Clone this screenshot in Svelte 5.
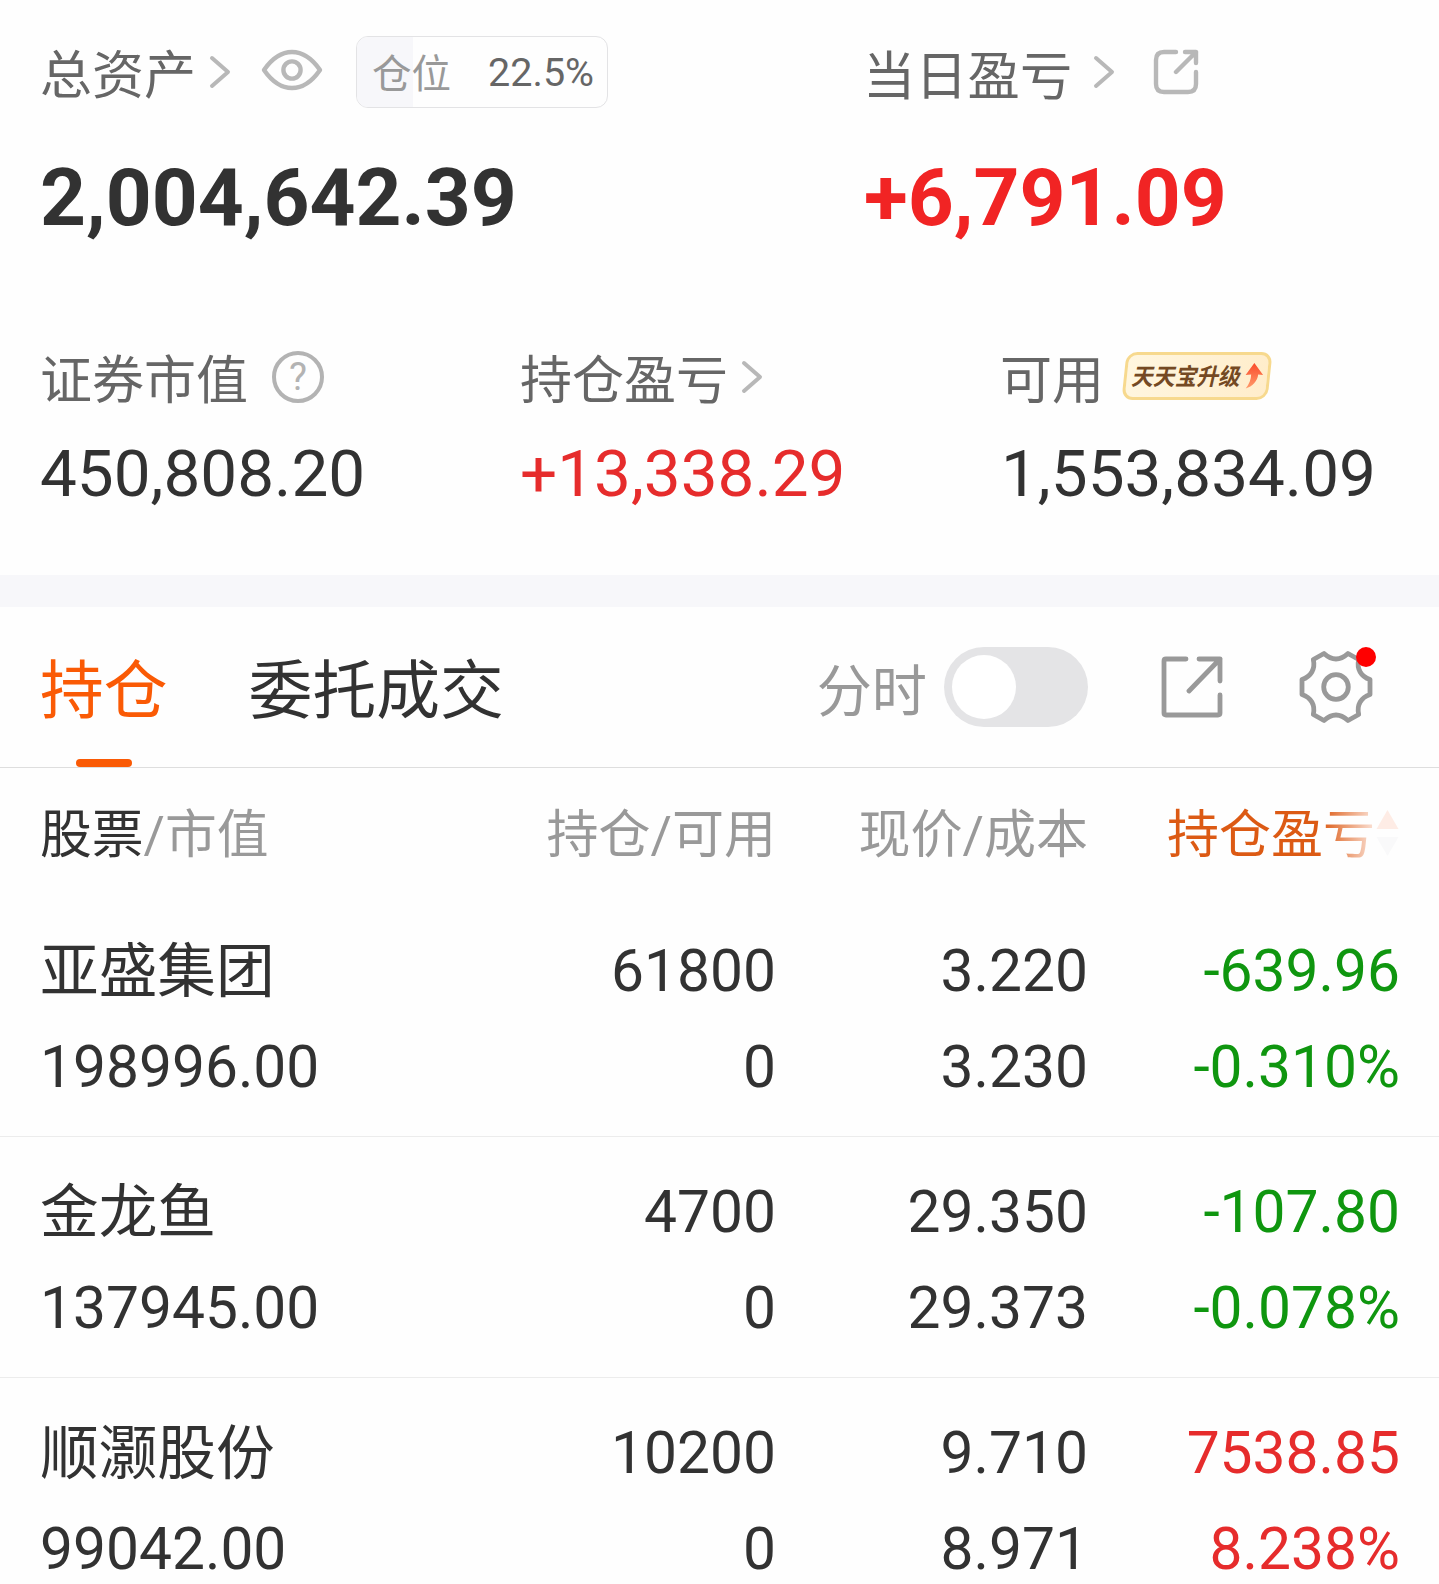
<script>
  const position = 22.5;
  const summary = [
    { label: '证券市值', value: '450,808.20', icon: 'help', tone: '' },
    { label: '持仓盈亏', value: '+13,338.29', icon: 'chevron', tone: 'up' },
    { label: '可用', value: '1,553,834.09', icon: 'badge', tone: '' }
  ];
  const holdings = [
    { name: '亚盛集团', value: '198996.00', held: '61800', free: '0', price: '3.220', cost: '3.230', pnl: '-639.96', pct: '-0.310%', tone: 'down' },
    { name: '金龙鱼', value: '137945.00', held: '4700', free: '0', price: '29.350', cost: '29.373', pnl: '-107.80', pct: '-0.078%', tone: 'down' },
    { name: '顺灏股份', value: '99042.00', held: '10200', free: '0', price: '9.710', cost: '8.971', pnl: '7538.85', pct: '8.238%', tone: 'up' }
  ];
</script>

{#snippet chevron()}
  <svg class="chevron" width="22" height="34" viewBox="0 0 22 34"><path d="M3 3 L19 17 L3 31" /></svg>
{/snippet}

<main>
  <section class="assets">
    <div class="top">
      <div class="total">
        <div class="label-row">
          <span class="label">总资产</span>
          {@render chevron()}
          <svg class="eye" width="62" height="42" viewBox="0 0 62 42">
            <path d="M3 21 C12 8 21 3 31 3 C41 3 50 8 59 21 C50 34 41 39 31 39 C21 39 12 34 3 21 Z" />
            <circle cx="31" cy="21" r="8.6" />
          </svg>
          <div class="pill">
            <div class="fill" style:width="{position}%"></div>
            <span class="pill-label">仓位</span>
            <span class="pill-value">{position}%</span>
          </div>
        </div>
        <div class="big">2,004,642.39</div>
      </div>
      <div class="today">
        <div class="label-row">
          <span class="label">当日盈亏</span>
          {@render chevron()}
          <svg class="share-small" width="46" height="46" viewBox="0 0 46 46">
            <path d="M23 3 H11 Q3 3 3 11 V35 Q3 43 11 43 H35 Q43 43 43 35 V23" />
            <path d="M32 3 H43 V14 M43 3 L23 23" />
          </svg>
        </div>
        <div class="big red">+6,791.09</div>
      </div>
    </div>
    <div class="summary">
      {#each summary as item}
        <div class="metric">
          <div class="metric-label">
            <span class="label">{item.label}</span>
            {#if item.icon === 'help'}
              <span class="help">?</span>
            {:else if item.icon === 'chevron'}
              {@render chevron()}
            {:else}
              <span class="badge">
                <span class="badge-text">天天宝升级</span>
                <svg width="20" height="28" viewBox="0 0 20 28">
                  <defs><linearGradient id="rise" x1="0" y1="0" x2="0" y2="1"><stop offset="0" stop-color="#fa4b2b" /><stop offset="1" stop-color="#ff9b6a" /></linearGradient></defs>
                  <path fill="url(#rise)" d="M9 1 L19 13 L14 12.500 C14 19 9.500 24.500 3 26.500 C6 22.500 7.500 17 7 12.500 L1.500 13 Z" />
                </svg>
              </span>
            {/if}
          </div>
          <div class="metric-value {item.tone}">{item.value}</div>
        </div>
      {/each}
    </div>
  </section>

  <nav>
    <div class="tab active"><span>持仓</span></div>
    <div class="tab"><span>委托成交</span></div>
    <div class="tools">
      <span class="minute">分时</span>
      <span class="toggle"><span class="knob"></span></span>
      <svg class="share-large" width="62" height="62" viewBox="0 0 62 62">
        <path d="M25 3 H5 Q3 3 3 5 V57 Q3 59 5 59 H57 Q59 59 59 57 V39" />
        <path d="M38 3 H59 V25 M59 3 L28 35" />
      </svg>
      <span class="gear">
        <svg width="76" height="76" viewBox="-38 -38 76 76">
          <path d="M-12 -33.500 Q0 -22.500 12 -33.500 L22.700 -27.500 C20.500 -18 25 -10.500 34 -7.500 V7.500 C25 10.500 20.500 18 22.700 27.500 L12 33.500 Q0 22.500 -12 33.500 L-22.700 27.500 C-20.500 18 -25 10.500 -34 7.500 V-7.500 C-25 -10.500 -20.500 -18 -22.700 -27.500 Z" />
          <circle r="12.300" />
        </svg>
        <i class="dot"></i>
      </span>
    </div>
  </nav>

  <section class="table">
    <div class="row head">
      <div><b>股票</b>/市值</div>
      <div>持仓/可用</div>
      <div>现价/成本</div>
      <div class="sorted">
        <span>持仓盈亏</span>
        <svg width="23" height="48" viewBox="0 0 23 48">
          <path fill="#feece5" d="M11.500 1 L22.500 20 H0.500 Z" />
          <path fill="#f9f9fa" d="M11.500 47 L22.500 28 H0.500 Z" />
        </svg>
      </div>
    </div>
    {#each holdings as h}
      <div class="row item">
        <div><p class="name">{h.name}</p><p class="worth">{h.value}</p></div>
        <div><p>{h.held}</p><p>{h.free}</p></div>
        <div><p>{h.price}</p><p>{h.cost}</p></div>
        <div class={h.tone}><p>{h.pnl}</p><p>{h.pct}</p></div>
      </div>
    {/each}
  </section>
</main>

<style>
  :global(body) { background: #fefefe; overflow: hidden; }
  main {
    width: 1439px;
    height: 1584px;
    overflow: hidden;
    color: #323232;
    font-family: Roboto, "Noto Sans CJK SC", sans-serif;
  }
  svg { display: block; flex: none; fill: none; stroke-linecap: round; stroke-linejoin: round; }
  .assets { height: 575px; box-sizing: border-box; padding: 36px 0 0 41px; }
  .top { display: grid; grid-template-columns: 823px 1fr; height: 308px; }
  .label-row { display: flex; align-items: center; height: 72px; }
  .label { margin-left: -1px; font-size: 52px; line-height: 72px; color: #666; white-space: nowrap; }
  .label-row .label { padding-top: 9px; }
  .today .label { font-size: 52.300px; }
  .metric-label .label { padding-top: 3px; }
  .chevron { stroke: #b8b8b8; stroke-width: 4; }
  .total .chevron { margin-left: 13px; }
  .eye { margin: -4px 0 0 30px; stroke: #b8b8b8; stroke-width: 4.4; }
  .pill {
    position: relative;
    display: flex;
    align-items: center;
    justify-content: space-between;
    width: 252px;
    height: 72px;
    box-sizing: border-box;
    margin-left: 33px;
    padding: 0 13px 0 15px;
    border: 1px solid #e3e3e5;
    border-radius: 12px;
    overflow: hidden;
    font-size: 39.500px;
  }
  .fill { position: absolute; left: 0; top: 0; bottom: 0; background: #f7f7fa; }
  .pill-label { position: relative; margin-top: -4px; color: #999; }
  .pill-value { padding-top: 1px; color: #666; }
  .today .chevron { margin-left: 21px; }
  .share-small { margin-left: 38px; stroke: #b8b8b8; stroke-width: 4.4; }
  .big { margin: 44px 0 0 -1px; font-size: 80.200px; line-height: 92px; font-weight: 700; }
  .today .big { margin-left: 0; }
  .red { color: #f12424; }
  .summary { display: grid; grid-template-columns: 480px 481px 1fr; }
  .metric-label { display: flex; align-items: center; height: 72px; }
  .help {
    width: 52px;
    height: 52px;
    box-sizing: border-box;
    margin: -6px 0 0 24px;
    border: 4px solid #b3b3b3;
    border-radius: 50%;
    color: #b3b3b3;
    font-size: 38px;
    line-height: 44px;
    text-align: center;
  }
  .metric .chevron { margin-left: 13px; margin-top: -6px; }
  .metric:last-child .label { margin-left: -2px; }
  .badge {
    display: flex;
    align-items: center;
    width: 146px;
    height: 48px;
    box-sizing: border-box;
    margin: -8px 0 0 20px;
    padding-left: 6px;
    border: 3px solid #f7d98e;
    border-radius: 11px;
    background: linear-gradient(90deg, #fff6df, #ffedcb);
    transform: skewX(-6deg);
  }
  .badge-text { flex: none; padding-top: 1px; font-size: 21.700px; font-weight: 700; line-height: 40px; white-space: nowrap; color: #744923; transform: skewX(-7deg) scaleY(1.08); }
  .badge svg { margin-left: 3px; }
  .metric-value { margin: 20px 0 0 -1px; font-size: 65.600px; line-height: 76px; }
  .up { color: #e62c2c; }
  .down { color: #0f960f; }

  nav {
    display: flex;
    align-items: center;
    height: 193px;
    box-sizing: border-box;
    padding: 0 65px 0 40px;
    border-top: 32px solid #f7f7fa;
    border-bottom: 1px solid #dedede;
  }
  .tab { position: relative; height: 160px; box-sizing: border-box; padding-top: 5px; margin-right: 81px; font-size: 63.800px; line-height: 160px; }
  .active { color: #fa5a05; }
  .active::after {
    content: "";
    position: absolute;
    left: 36px;
    bottom: 0;
    width: 56px;
    height: 8px;
    border-radius: 4px;
    background: #fa5a05;
  }
  .tools { display: flex; align-items: center; margin-left: auto; }
  .minute { font-size: 55.200px; color: #999; }
  .toggle { width: 144px; height: 80px; box-sizing: border-box; margin-left: 17px; padding: 8px; border-radius: 40px; background: #e4e4e6; }
  .knob { display: block; width: 64px; height: 64px; border-radius: 50%; background: #fff; }
  .share-large { margin-left: 73px; stroke: #999; stroke-width: 4.800; }
  .gear { position: relative; margin-left: 75px; stroke: #999; stroke-width: 4.800; }
  .dot { position: absolute; right: -2px; top: -2px; width: 20px; height: 20px; border-radius: 50%; background: #f00; }

  .row { display: grid; grid-template-columns: 435px 300px 312px 312px; padding-left: 41px; text-align: right; }
  .row > :first-child { text-align: left; }
  .head { height: 128px; font-size: 52px; line-height: 136px; color: #999; }
  .head > :first-child { margin-left: -1px; font-size: 51.800px; }
  .head b { font-weight: 400; color: #323232; }
  .sorted { display: flex; align-items: center; justify-content: flex-end; }
  .sorted span {
    background: linear-gradient(90deg, #dc5a14 74%, #fbe3d8 100%);
    background-clip: text;
    color: transparent;
  }
  .sorted svg { margin: -6px 1px 0 1px; }
  .item { height: 241px; box-sizing: border-box; padding-top: 27px; border-bottom: 1px solid #ececec; font-size: 58.700px; }
  p { margin: 0; height: 96px; line-height: 96px; }
  .name { box-sizing: border-box; padding-top: 1px; }
  .name, .worth { margin-left: -1px; }
</style>
